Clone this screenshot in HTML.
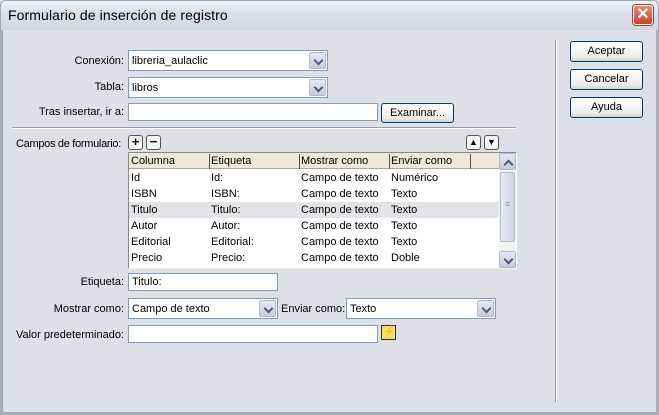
<!DOCTYPE html>
<html><head><meta charset="utf-8"><style>
*{box-sizing:border-box;margin:0;padding:0}
body{width:659px;height:415px;overflow:hidden;background:#dfdfe7;font-family:"Liberation Sans",sans-serif;font-size:11px;color:#000;position:relative}
.a{position:absolute}
.lbl{position:absolute;text-align:right;white-space:nowrap;line-height:14px}
.inp{position:absolute;background:#fff;border:1px solid #7f9db9;padding:1px 3px;line-height:14px;white-space:nowrap}
.sel{line-height:18px !important;padding-top:1px}
.dd{position:absolute;right:1px;top:1px;bottom:1px;width:17px;background:linear-gradient(#e6e8f2,#c6cadb);border:1px solid #b0b8d0;border-radius:2px}
.dd:after{content:"";position:absolute;left:5px;top:4px;width:5px;height:5px;border-right:2px solid #4d5a78;border-bottom:2px solid #4d5a78;transform:rotate(45deg)}
.up:after{top:7px;transform:rotate(-135deg)}
.btn{position:absolute;border:1px solid #003c74;border-radius:3px;background:linear-gradient(#fff,#ecebe6 80%,#d6d0c5);text-align:center;line-height:18px}
.sm{position:absolute;width:15px;height:15px;border:1px solid #555;border-radius:3px;background:#f4f4f4;text-align:center;font-weight:bold;font-size:13px;line-height:12px}
.row{position:absolute;left:129px;width:370px;height:16px;line-height:16px}
.row span{position:absolute}
</style></head><body>
<div class="a" style="left:0;top:0;width:659px;height:30px;background:linear-gradient(#f4f4f8,#dddfe8 40%,#d3d5e0);border-radius:6px 6px 0 0;border:1px solid #a0a4b8;border-bottom:none"></div>
<div class="a" style="left:8px;top:7px;font-size:14px;color:#000;letter-spacing:0.1px">Formulario de inserción de registro</div>
<div class="a" style="left:633px;top:5px;width:20px;height:20px;background:linear-gradient(#e88a78,#c8452e);border:1px solid #fff;border-radius:3px;box-shadow:0 0 0 1px #a04030;color:#fff;font-size:16px;font-weight:bold;text-align:center;line-height:18px">✕</div>
<div class="a" style="left:0;top:30px;width:3px;height:385px;background:#a9abb8"></div>
<div class="a" style="right:0;top:30px;width:3px;height:385px;background:#a9abb8"></div>
<div class="a" style="left:0;bottom:0;width:659px;height:3px;background:#a9abb8"></div>

<div class="lbl" style="right:535px;top:54px">Conexión:</div>
<div class="inp sel" style="left:128px;top:50px;width:200px;height:21px">libreria_aulaclic<div class="dd"></div></div>
<div class="lbl" style="right:535px;top:80px">Tabla:</div>
<div class="inp sel" style="left:128px;top:77px;width:200px;height:21px">libros<div class="dd"></div></div>
<div class="lbl" style="right:535px;top:105px">Tras insertar, ir a:</div>
<div class="inp" style="left:128px;top:103px;width:250px;height:18px"></div>
<div class="btn" style="left:381px;top:103px;width:73px;height:20px">Examinar...</div>
<div class="a" style="left:12px;top:127px;width:504px;height:2px;border-top:1px solid #9a9aa0;border-bottom:1px solid #fff"></div>
<div class="a" style="left:555px;top:40px;width:2px;height:362px;border-left:1px solid #9a9aa0;border-right:1px solid #fff"></div>
<div class="btn" style="left:570px;top:41px;width:73px;height:21px">Aceptar</div>
<div class="btn" style="left:570px;top:69px;width:73px;height:21px">Cancelar</div>
<div class="btn" style="left:570px;top:97px;width:73px;height:21px">Ayuda</div>

<div class="lbl" style="left:16px;top:137px;letter-spacing:-0.3px">Campos de formulario:</div>
<div class="sm" style="left:128px;top:135px">+</div>
<div class="sm" style="left:146px;top:135px">−</div>
<div class="sm" style="left:466px;top:135px;font-size:9px;line-height:12px">▲</div>
<div class="sm" style="left:484px;top:135px;font-size:9px;line-height:12px">▼</div>

<div class="a" style="left:128px;top:152px;width:389px;height:117px;background:#fff;border:1px solid #888;border-right-color:#fff;border-bottom-color:#f0f0e0"></div>
<div class="a" style="left:129px;top:153px;width:370px;height:16px;background:#ece9d8;border-bottom:1px solid #aca899"></div>
<div class="row" style="top:153px"><span style="left:2px">Columna</span><span style="left:82px">Etiqueta</span><span style="left:172px">Mostrar como</span><span style="left:262px">Enviar como</span></div>
<div class="a" style="left:209px;top:154px;width:1px;height:15px;background:#555"></div>
<div class="a" style="left:299px;top:154px;width:1px;height:15px;background:#555"></div>
<div class="a" style="left:389px;top:154px;width:1px;height:15px;background:#555"></div>
<div class="a" style="left:470px;top:154px;width:1px;height:15px;background:#555"></div>
<div class="a" style="left:129px;top:202px;width:370px;height:16px;background:#e3e3e8"></div>
<div class="row" style="top:170px"><span style="left:2px">Id</span><span style="left:82px">Id:</span><span style="left:172px">Campo de texto</span><span style="left:262px">Numérico</span></div>
<div class="row" style="top:186px"><span style="left:2px">ISBN</span><span style="left:82px">ISBN:</span><span style="left:172px">Campo de texto</span><span style="left:262px">Texto</span></div>
<div class="row" style="top:202px"><span style="left:2px">Titulo</span><span style="left:82px">Titulo:</span><span style="left:172px">Campo de texto</span><span style="left:262px">Texto</span></div>
<div class="row" style="top:218px"><span style="left:2px">Autor</span><span style="left:82px">Autor:</span><span style="left:172px">Campo de texto</span><span style="left:262px">Texto</span></div>
<div class="row" style="top:234px"><span style="left:2px">Editorial</span><span style="left:82px">Editorial:</span><span style="left:172px">Campo de texto</span><span style="left:262px">Texto</span></div>
<div class="row" style="top:250px"><span style="left:2px">Precio</span><span style="left:82px">Precio:</span><span style="left:172px">Campo de texto</span><span style="left:262px">Doble</span></div>
<div class="a" style="left:499px;top:153px;width:17px;height:115px;background:#f4f4f0"></div>
<div class="a" style="left:499px;top:153px;width:17px;height:17px"><div class="dd up" style="right:0;top:0;bottom:0"></div></div>
<div class="a" style="left:500px;top:172px;width:15px;height:70px;background:linear-gradient(90deg,#e8eaf4,#cfd3e4);border:1px solid #b0b8d0;border-radius:2px;text-align:center;color:#999;font-size:9px;line-height:62px">≡</div>
<div class="a" style="left:499px;top:251px;width:17px;height:17px"><div class="dd" style="right:0;top:0;bottom:0"></div></div>

<div class="lbl" style="right:535px;top:275px">Etiqueta:</div>
<div class="inp" style="left:128px;top:273px;width:150px;height:18px">Titulo:</div>
<div class="lbl" style="right:535px;top:302px">Mostrar como:</div>
<div class="inp sel" style="left:128px;top:298px;width:150px;height:21px">Campo de texto<div class="dd"></div></div>
<div class="lbl" style="left:281px;top:302px">Enviar como:</div>
<div class="inp sel" style="left:346px;top:298px;width:150px;height:21px">Texto<div class="dd"></div></div>
<div class="lbl" style="right:535px;top:328px">Valor predeterminado:</div>
<div class="inp" style="left:128px;top:325px;width:250px;height:18px"></div>
<div class="a" style="left:381px;top:325px;width:15px;height:15px;background:#f0e070;border:1px solid #333;text-align:center;font-size:11px;line-height:13px;color:#c07000">⚡</div>
</body></html>
